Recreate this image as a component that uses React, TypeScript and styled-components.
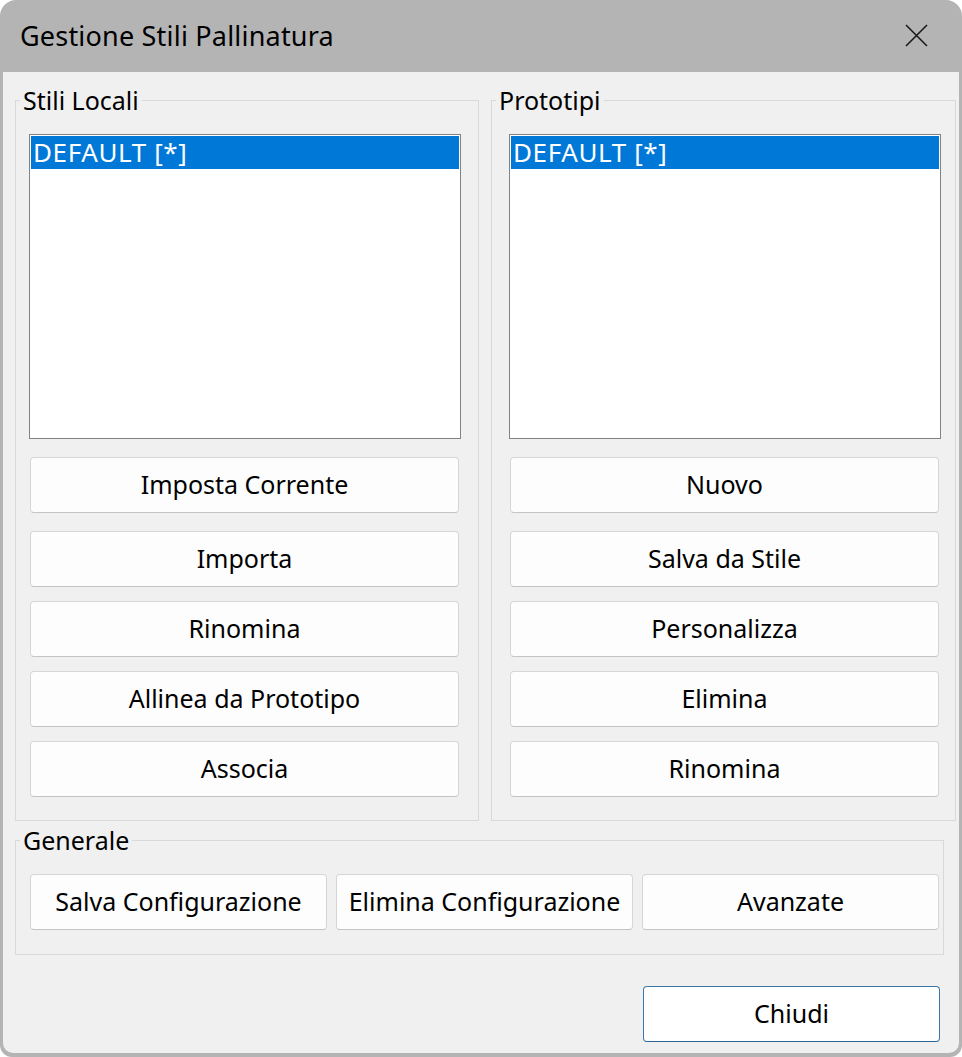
import { createGlobalStyle, styled } from "styled-components";

const GlobalStyle = createGlobalStyle`
  html, body {
    margin: 0;
    padding: 0;
    background: #ffffff;
  }
  body {
    font-family: "Noto Sans", "Open Sans", sans-serif;
  }
`;

const Window = styled.div`
  width: 962px;
  height: 1057px;
  box-sizing: border-box;
  background: #b4b4b4;
  border-radius: 16px 16px 12px 12px;
  padding: 0 3px 4px 3px;
  display: flex;
  flex-direction: column;
  overflow: hidden;
`;

const TitleBar = styled.div`
  height: 72px;
  flex: none;
  display: flex;
  align-items: center;
  justify-content: space-between;
  padding: 0 30px 0 17px;
`;

const Caption = styled.div`
  font-size: 27px;
  letter-spacing: 0.2px;
  color: #000;
  padding-bottom: 1px;
`;

const CloseButton = styled.button`
  width: 26px;
  height: 26px;
  padding: 0;
  border: none;
  background: transparent;
  display: flex;
  align-items: center;
  justify-content: center;
  margin-bottom: 2px;
`;

const Client = styled.div`
  flex: 1;
  background: #f0f0f0;
  border-radius: 0 0 10px 10px;
  padding: 14px 0 0 12px;
  display: flex;
  flex-direction: column;
`;

const TopRow = styled.div`
  display: flex;
  gap: 12px;
`;

const Group = styled.fieldset<{ $width: number }>`
  width: ${({ $width }) => $width}px;
  box-sizing: border-box;
  margin: 0;
  padding: 0;
  border: 1px solid #d9d9d9;
  min-width: 0;
`;

const Legend = styled.legend`
  font-size: 25px;
  line-height: 29px;
  padding: 0 3px;
  margin-left: 4px;
  color: #000;
`;

const GroupBody = styled.div<{ $left: number }>`
  padding: 19px 0 23px ${({ $left }) => $left}px;
  display: flex;
  flex-direction: column;
`;

const ListBox = styled.div`
  width: 432px;
  height: 305px;
  box-sizing: border-box;
  border: 1px solid #828282;
  background: #ffffff;
  padding: 1px;
`;

const ListItem = styled.div<{ $selected?: boolean }>`
  height: 33px;
  line-height: 33px;
  padding-left: 2px;
  font-size: 26px;
  letter-spacing: 0.6px;
  background: ${({ $selected }) => ($selected ? "#0078d7" : "transparent")};
  color: ${({ $selected }) => ($selected ? "#ffffff" : "#000000")};
  white-space: nowrap;
`;

const ButtonColumn = styled.div`
  display: flex;
  flex-direction: column;
  gap: 14px;
  margin-top: 18px;
  padding-left: 1px;
  width: 429px;
`;

const PushButton = styled.button<{ $wide?: boolean; $isDefault?: boolean }>`
  height: 56px;
  width: ${({ $wide }) => ($wide ? "297px" : "100%")};
  box-sizing: border-box;
  background: ${({ $isDefault }) => ($isDefault ? "#ffffff" : "#fdfdfd")};
  border: 1px solid ${({ $isDefault }) => ($isDefault ? "#3a78aa" : "#d6d6d6")};
  border-bottom-color: ${({ $isDefault }) => ($isDefault ? "#2a6699" : "#c4c4c4")};
  border-radius: 4px;
  font-family: "Noto Sans", "Open Sans", sans-serif;
  font-size: 25px;
  color: #000;
  padding: 0 0 2px;
  cursor: default;

  &:first-child {
    margin-bottom: ${({ $wide }) => ($wide ? "0" : "4px")};
  }
`;

const GeneralGroup = styled(Group)`
  margin-top: 5px;
`;

const GeneralRow = styled.div`
  display: flex;
  gap: 9px;
  padding: 19px 0 24px 14px;
`;

const Footer = styled.div`
  display: flex;
  justify-content: flex-end;
  padding: 31px 19px 0 0;
`;

const CloseIcon = () => (
  <svg width="23" height="23" viewBox="0 0 23 23">
    <path d="M1 1 L22 22 M22 1 L1 22" stroke="#1a1a1a" strokeWidth="1.6" fill="none" />
  </svg>
);

const localButtons = ["Imposta Corrente", "Importa", "Rinomina", "Allinea da Prototipo", "Associa"];
const protoButtons = ["Nuovo", "Salva da Stile", "Personalizza", "Elimina", "Rinomina"];

export default function App() {
  return (
    <>
      <GlobalStyle />
      <Window>
        <TitleBar>
          <Caption>Gestione Stili Pallinatura</Caption>
          <CloseButton aria-label="Chiudi">
            <CloseIcon />
          </CloseButton>
        </TitleBar>
        <Client>
          <TopRow>
            <Group $width={464}>
              <Legend>Stili Locali</Legend>
              <GroupBody $left={13}>
                <ListBox>
                  <ListItem $selected>DEFAULT [*]</ListItem>
                </ListBox>
                <ButtonColumn>
                  {localButtons.map((label) => (
                    <PushButton key={label}>{label}</PushButton>
                  ))}
                </ButtonColumn>
              </GroupBody>
            </Group>
            <Group $width={465}>
              <Legend>Prototipi</Legend>
              <GroupBody $left={17}>
                <ListBox>
                  <ListItem $selected>DEFAULT [*]</ListItem>
                </ListBox>
                <ButtonColumn>
                  {protoButtons.map((label) => (
                    <PushButton key={label}>{label}</PushButton>
                  ))}
                </ButtonColumn>
              </GroupBody>
            </Group>
          </TopRow>
          <GeneralGroup $width={929}>
            <Legend>Generale</Legend>
            <GeneralRow>
              <PushButton $wide>Salva Configurazione</PushButton>
              <PushButton $wide>Elimina Configurazione</PushButton>
              <PushButton $wide>Avanzate</PushButton>
            </GeneralRow>
          </GeneralGroup>
          <Footer>
            <PushButton $wide $isDefault>Chiudi</PushButton>
          </Footer>
        </Client>
      </Window>
    </>
  );
}
